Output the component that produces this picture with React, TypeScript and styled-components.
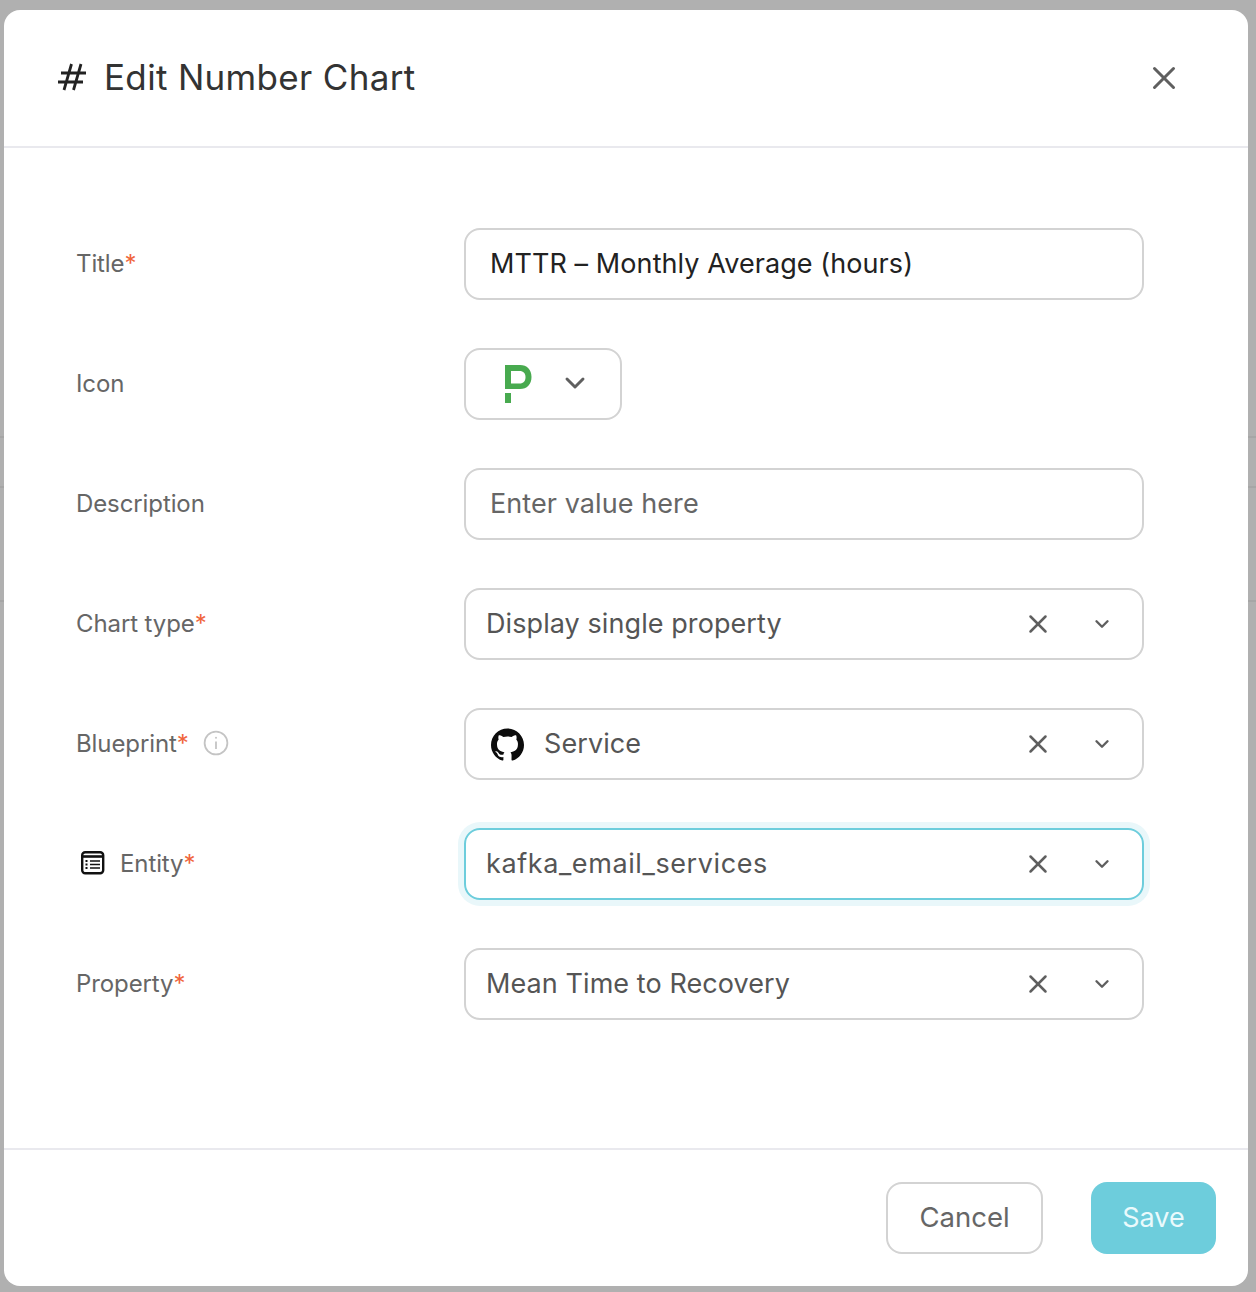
import React from 'react';
import styled, {createGlobalStyle} from "styled-components";
import {ChevronDown, X} from "lucide-react";
import {SiGithub} from "react-icons/si";

const GlobalStyle = createGlobalStyle`
    * {
        box-sizing: border-box;
    }
    html, body {
        margin: 0;
        padding: 0;
        background: #b0b0b0;
    }
    body {
        font-family: Inter, "Noto Sans", "Liberation Sans", sans-serif;
    }
`

const HashIcon = () => (
    <svg width="30" height="30" viewBox="0 0 30 30" fill="none" stroke="#222" strokeWidth="2.8">
        <path d="M4 11H29M1 20H26M14.5 2L7 28M24 2L16.5 28"/>
    </svg>
)

const PagerDutyIcon = () => (
    <svg width="28" height="38" viewBox="0 0 28 38" fill="#48aa4f">
        <path fillRule="evenodd" d="M1 0H16C23 0 27.5 4.5 27.5 12C27.5 19.5 23 24 16 24H1ZM7 6V18.5H15.5C19.5 18.5 21.5 16 21.5 12.2C21.5 8.5 19.5 6 15.5 6Z"/>
        <rect x="1" y="28" width="6" height="10"/>
    </svg>
)

const EntityIcon = () => (
    <svg width="26" height="26" viewBox="0 0 26 26" fill="none" stroke="#111">
        <rect x="2.2" y="2.2" width="21" height="21" rx="3" strokeWidth="2.4"/>
        <path d="M2 6.5H23" strokeWidth="2.6"/>
        <path d="M10 11H20M10 14.5H20M10 18H20" strokeWidth="1.7"/>
        <path d="M5.5 11H7.5M5.5 14.5H7.5M5.5 18H7.5" strokeWidth="2"/>
    </svg>
)

const InfoIcon = () => (
    <svg width="26" height="26" viewBox="0 0 26 26" fill="none" stroke="#c4c4c4" strokeWidth="1.8">
        <circle cx="13" cy="13" r="11.4"/>
        <path d="M13 11.5V19"/>
        <circle cx="13" cy="7.8" r="1" fill="#c4c4c4" stroke="none"/>
    </svg>
)

type SelectProps = {
    focused?: boolean;
    spacing?: string;
    children: React.ReactNode;
}

const SelectField = (props: SelectProps) => (
    <SelectBox $focused={props.focused}>
        <SelectValue $spacing={props.spacing}>{props.children}</SelectValue>
        <ClearButton><X size={30} strokeWidth={2} /></ClearButton>
        <ChevronButton><ChevronDown size={22} strokeWidth={2.6} /></ChevronButton>
    </SelectBox>
)

export default function App() {
    return (
        <Backdrop>
            <GlobalStyle/>
            <Modal>
                <Header>
                    <HeaderTitle>
                        <HashIcon/>
                        <Title>Edit Number Chart</Title>
                    </HeaderTitle>
                    <CloseButton><X size={38} strokeWidth={1.9} /></CloseButton>
                </Header>
                <Body>
                    <Row>
                        <Label>Title<Required>*</Required></Label>
                        <TextBox $dark>MTTR – Monthly Average (hours)</TextBox>
                    </Row>
                    <Row>
                        <Label>Icon</Label>
                        <IconPicker>
                            <PagerDutyIcon/>
                            <PickerChevron><ChevronDown size={32} strokeWidth={2.2} /></PickerChevron>
                        </IconPicker>
                    </Row>
                    <Row>
                        <Label>Description</Label>
                        <TextBox>Enter value here</TextBox>
                    </Row>
                    <Row>
                        <Label>Chart type<Required>*</Required></Label>
                        <SelectField>Display single property</SelectField>
                    </Row>
                    <Row>
                        <Label>
                            Blueprint<Required>*</Required>
                            <InfoWrap><InfoIcon/></InfoWrap>
                        </Label>
                        <SelectField>
                            <GithubWrap><SiGithub size={33} /></GithubWrap>
                            Service
                        </SelectField>
                    </Row>
                    <Row>
                        <Label>
                            <EntityWrap><EntityIcon/></EntityWrap>
                            Entity<Required>*</Required>
                        </Label>
                        <SelectField focused spacing="0.6px">kafka_email_services</SelectField>
                    </Row>
                    <Row>
                        <Label>Property<Required>*</Required></Label>
                        <SelectField>Mean Time to Recovery</SelectField>
                    </Row>
                </Body>
                <Footer>
                    <CancelButton>Cancel</CancelButton>
                    <SaveButton>Save</SaveButton>
                </Footer>
            </Modal>
        </Backdrop>
    );
}

const Backdrop = styled.div`
    width: 1256px;
    height: 1292px;
    padding: 10px 8px 6px 4px;
    overflow: hidden;
    background-color: #b0b0b0;
    background-image:
        linear-gradient(#a6a6a6, #a6a6a6),
        linear-gradient(#a6a6a6, #a6a6a6),
        linear-gradient(#a6a6a6, #a6a6a6);
    background-size: 100% 2px;
    background-repeat: no-repeat;
    background-position: 0 436px, 0 486px, 0 600px;
`

const Modal = styled.div`
    width: 1244px;
    height: 1276px;
    display: flex;
    flex-direction: column;
    background: #fff;
    border-radius: 16px;
`

const Header = styled.header`
    height: 138px;
    flex-shrink: 0;
    display: flex;
    align-items: center;
    justify-content: space-between;
    padding: 0 65px 2px 53px;
    border-bottom: 2px solid #e9e9ee;
`

const HeaderTitle = styled.div`
    display: flex;
    align-items: center;
    gap: 17px;
`

const Title = styled.h1`
    margin: 0;
    font-size: 35px;
    font-weight: 400;
    letter-spacing: 0.33px;
    color: #333;
`

const CloseButton = styled.div`
    display: flex;
    margin-top: 2px;
    color: #5f5f5f;
`

const Body = styled.main`
    flex: 1;
    display: flex;
    flex-direction: column;
    gap: 48px;
    padding: 80px 104px 0 72px;
`

const Row = styled.div`
    height: 72px;
    display: flex;
    align-items: center;
`

const Label = styled.label`
    width: 388px;
    flex-shrink: 0;
    display: flex;
    align-items: center;
    padding-bottom: 2px;
    font-size: 24px;
    letter-spacing: -0.1px;
    color: #666;
`

const Required = styled.span`
    color: #f0653c;
    align-self: flex-start;
`

const InfoWrap = styled.span`
    display: flex;
    margin-left: 14px;
`

const EntityWrap = styled.span`
    display: flex;
    margin: 0 14px 0 4px;
`

const TextBox = styled.div<{ $dark?: boolean }>`
    width: 680px;
    height: 72px;
    display: flex;
    align-items: center;
    padding: 0 24px 2px;
    border: 2px solid #d3d3d3;
    border-radius: 16px;
    font-size: 27px;
    letter-spacing: 0.08px;
    color: ${props => props.$dark ? "#222" : "#666"};
`

const IconPicker = styled.div`
    width: 158px;
    height: 72px;
    display: flex;
    align-items: center;
    gap: 27px;
    padding-left: 38px;
    border: 2px solid #d3d3d3;
    border-radius: 16px;
    color: #5f5f5f;
`

const PickerChevron = styled.span`
    display: flex;
    margin-top: -2px;
`

const SelectBox = styled.div<{ $focused?: boolean }>`
    width: 680px;
    height: 72px;
    display: flex;
    align-items: center;
    padding: 0 29px 0 20px;
    border: 2px solid ${props => props.$focused ? "#6dcddc" : "#d3d3d3"};
    border-radius: 16px;
    box-shadow: ${props => props.$focused ? "0 0 0 6px #e9f7fa" : "none"};
`

const SelectValue = styled.div<{ $spacing?: string }>`
    flex: 1;
    display: flex;
    align-items: center;
    padding-bottom: 2px;
    font-size: 27px;
    letter-spacing: ${props => props.$spacing || "0.08px"};
    color: #555;
`

const GithubWrap = styled.span`
    display: flex;
    margin: 2px 20px 0 5px;
    color: #0c0c0c;
`

const ClearButton = styled.span`
    display: flex;
    color: #5f5f5f;
    margin-right: 38px;
`

const ChevronButton = styled.span`
    display: flex;
    color: #5f5f5f;
`

const Footer = styled.footer`
    height: 138px;
    flex-shrink: 0;
    display: flex;
    align-items: flex-start;
    justify-content: flex-end;
    gap: 48px;
    padding: 32px 32px 0 0;
    border-top: 2px solid #e9e9ee;
`

const CancelButton = styled.button`
    width: 157px;
    height: 72px;
    padding: 0 0 2px;
    background: #fff;
    border: 2px solid #d3d3d3;
    border-radius: 16px;
    font-family: inherit;
    font-size: 27.5px;
    color: #666;
`

const SaveButton = styled.button`
    width: 125px;
    height: 72px;
    padding: 0 0 2px;
    background: #6dcddc;
    border: none;
    border-radius: 16px;
    font-family: inherit;
    font-size: 27px;
    color: #eafafc;
`
